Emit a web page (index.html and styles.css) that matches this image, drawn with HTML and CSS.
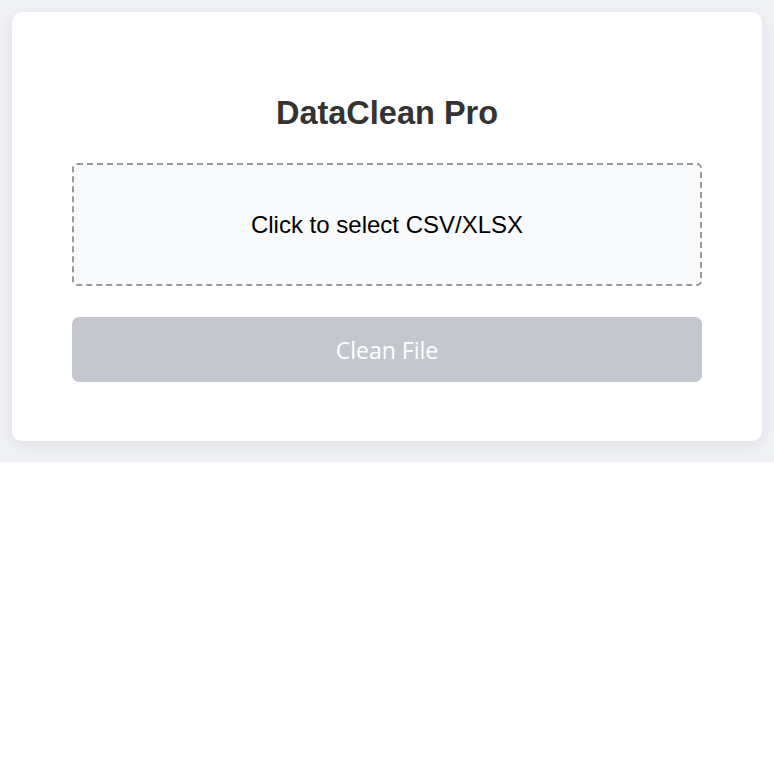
FILE: index.html
```html
<!DOCTYPE html>
<html>
<head>
<meta charset="utf-8">
<link rel="stylesheet" href="styles.css">
</head>
<body>
<div class="wrap">
  <div class="card">
    <h1 class="title">DataClean Pro</h1>
    <div class="drop">Click to select CSV/XLSX</div>
    <button class="btn" disabled>Clean File</button>
  </div>
</div>
</body>
</html>
```
FILE: styles.css
```css
html, body {
  margin: 0;
  padding: 0;
  background: #ffffff;
}
.wrap {
  background: #f0f1f5;
  padding: 12px 12px 21px;
}
.card {
  background: #ffffff;
  border-radius: 10px;
  box-shadow: 0 4px 16px rgba(40, 44, 70, 0.08);
  padding: 60px 60px 59px;
  display: flex;
  flex-direction: column;
}
.title {
  margin: 23px 0 31px;
  text-align: center;
  font-family: "Liberation Sans", Arial, sans-serif;
  font-size: 32.5px;
  line-height: 37px;
  font-weight: bold;
  color: #333333;
}
.drop {
  border: 2px dashed #999999;
  border-radius: 5px;
  background: #f8f9fb;
  padding: 46px 0;
  text-align: center;
  font-family: "Liberation Sans", Arial, sans-serif;
  font-size: 24px;
  color: #000000;
  line-height: 27px;
}
.btn {
  margin-top: 31px;
  height: 65px;
  border: none;
  border-radius: 7px;
  background: #c5c7cf;
  color: #ffffff;
  font-family: "Open Sans", sans-serif;
  font-size: 23px;
}
```
